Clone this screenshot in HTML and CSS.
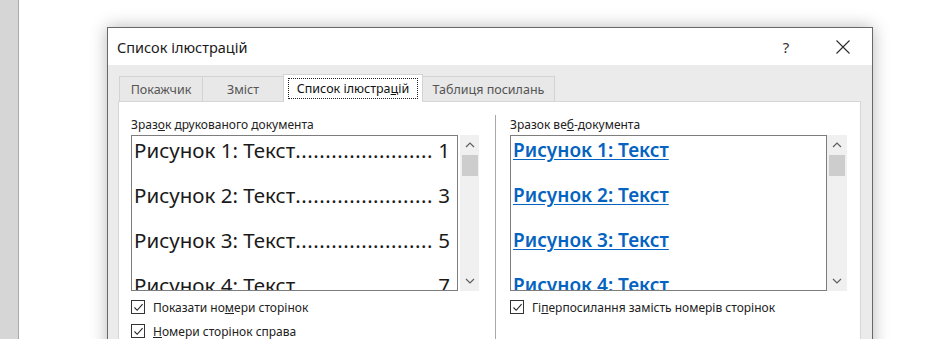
FILE: index.html
```html
<!DOCTYPE html>
<html lang="uk">
<head>
  <meta charset="UTF-8" />
  <title>Список ілюстрацій</title>
  <link rel="stylesheet" href="styles.css">
</head>
<body>
  <div class="screen">
    <div class="side"></div>
    <div class="doc">
      <div class="dialog">
        <div class="titlebar">
          <span class="title">Список ілюстрацій</span>
          <span class="help">?</span>
          <span class="close">
            <svg width="14" height="14" viewBox="0 0 14 14"><path d="M0.5 0.5L13.5 13.5M13.5 0.5L0.5 13.5" stroke="#2b2b2b" stroke-width="1.1" fill="none"/></svg>
          </span>
        </div>

        <div class="dlg-body">
          <div class="tabs">
            <div class="tab t1">Покажчик</div>
            <div class="tab t2">Зміст</div>
            <div class="tab t3 active"><span class="focus">Список ілюстра<u>ц</u>ій</span></div>
            <div class="tab t4">Таблиця посилань</div>
          </div>

          <div class="panel">
            <div class="col col-left">
              <div class="group-label">Зраз<u>о</u>к друкованого документа</div>
              <div class="preview">
                <div class="listbox print">
                  <div class="entry"><span>Рисунок 1: Текст<span class="dots">.......................</span></span><span class="num">1</span></div>
                  <div class="entry"><span>Рисунок 2: Текст<span class="dots">.......................</span></span><span class="num">3</span></div>
                  <div class="entry"><span>Рисунок 3: Текст<span class="dots">.......................</span></span><span class="num">5</span></div>
                  <div class="entry"><span>Рисунок 4: Текст<span class="dots">.......................</span></span><span class="num">7</span></div>
                </div>
                <div class="scrollbar">
                  <svg class="arrow" width="10" height="6" viewBox="0 0 10 6"><path d="M1 5L5 1L9 5" stroke="#5f5f5f" stroke-width="1.2" fill="none"/></svg>
                  <div class="thumb"></div>
                  <svg class="arrow down" width="10" height="6" viewBox="0 0 10 6"><path d="M1 1L5 5L9 1" stroke="#5f5f5f" stroke-width="1.2" fill="none"/></svg>
                </div>
              </div>
              <div class="check">
                <span class="box"><svg width="11" height="11" viewBox="0 0 11 11"><path d="M1.5 5.5L4.2 8.3L9.6 2.2" stroke="#222" stroke-width="1.1" fill="none"/></svg></span>
                <span>Показати но<u>м</u>ери сторінок</span>
              </div>
              <div class="check">
                <span class="box"><svg width="11" height="11" viewBox="0 0 11 11"><path d="M1.5 5.5L4.2 8.3L9.6 2.2" stroke="#222" stroke-width="1.1" fill="none"/></svg></span>
                <span><u>Н</u>омери сторінок справа</span>
              </div>
            </div>

            <div class="sep"></div>

            <div class="col col-right">
              <div class="group-label">Зразок ве<u>б</u>-документа</div>
              <div class="preview">
                <div class="listbox web">
                  <div class="link">Рисунок 1: Текст</div>
                  <div class="link">Рисунок 2: Текст</div>
                  <div class="link">Рисунок 3: Текст</div>
                  <div class="link">Рисунок 4: Текст</div>
                </div>
                <div class="scrollbar">
                  <svg class="arrow" width="10" height="6" viewBox="0 0 10 6"><path d="M1 5L5 1L9 5" stroke="#5f5f5f" stroke-width="1.2" fill="none"/></svg>
                  <div class="thumb"></div>
                  <svg class="arrow down" width="10" height="6" viewBox="0 0 10 6"><path d="M1 1L5 5L9 1" stroke="#5f5f5f" stroke-width="1.2" fill="none"/></svg>
                </div>
              </div>
              <div class="check">
                <span class="box"><svg width="11" height="11" viewBox="0 0 11 11"><path d="M1.5 5.5L4.2 8.3L9.6 2.2" stroke="#222" stroke-width="1.1" fill="none"/></svg></span>
                <span>Гі<u>п</u>ерпосилання замість номерів сторінок</span>
              </div>
            </div>
          </div>
        </div>
      </div>
    </div>
  </div>
</body>
</html>
```

FILE: styles.css
```css
body {
  margin: 0;
  background: #fff;
  font-family: "Noto Sans", "Open Sans", sans-serif;
  color: #1e1e1e;
  overflow: hidden;
}

.screen {
  display: flex;
  height: 339px;
  overflow: hidden;
}

.side {
  width: 18px;
  flex: none;
  background: #d6d6d6;
  border-right: 1px solid #a9a9a9;
}

.doc {
  flex: 1;
  padding: 27px 0 0 88px;
}

.dialog {
  width: 766px;
  box-sizing: border-box;
  border: 1px solid #686868;
  background: #fff;
  box-shadow: 0 0 16px rgba(0, 0, 0, 0.28);
}

/* title bar */
.titlebar {
  height: 37px;
  display: flex;
  align-items: center;
  padding-left: 9px;
}

.title {
  font-size: 14.5px;
  color: #1a1a1a;
  margin-top: 1px;
}

.help {
  margin-left: auto;
  width: 30px;
  margin-right: 27px;
  text-align: center;
  font-size: 15px;
  color: #333;
}

.close {
  width: 30px;
  margin-right: 14px;
  display: flex;
  justify-content: center;
}

/* gray body with tabs */
.dlg-body {
  background: #ebebeb;
  padding: 9px 11px 0 10px;
}

.tabs {
  display: flex;
  align-items: flex-end;
  height: 27px;
  padding-left: 1px;
}

.tab {
  box-sizing: border-box;
  height: 25px;
  border: 1px solid #d3d3d3;
  border-bottom: none;
  background: #e8e8e8;
  color: #555;
  font-size: 12.5px;
  display: flex;
  align-items: center;
  justify-content: center;
  margin-right: -1px;
}

.t1 { width: 84px; }
.t2 { width: 82px; }
.t3 { width: 140px; }
.t4 { width: 133px; }

.tab.active {
  height: 28px;
  margin-bottom: -1px;
  background: #fff;
  color: #111;
  position: relative;
  z-index: 1;
  padding: 3px 4px 3px;
  align-items: stretch;
}

.focus {
  flex: 1;
  border: 1px dotted #222;
  display: flex;
  align-items: center;
  justify-content: center;
}

.panel {
  background: #fff;
  border: 1px solid #d6d6d6;
  height: 260px;
  display: flex;
  padding: 15px 0 0 12px;
}

.col-left {
  width: 348px;
}

.sep {
  width: 1px;
  background: #a8a8a8;
  margin: -2px 14px 0 16px;
}

.col-right {
  width: 337px;
}

.group-label {
  font-size: 12px;
  line-height: 16px;
  color: #222;
  margin-bottom: 2px;
}

.preview {
  display: flex;
  height: 156px;
}

.listbox {
  flex: 1;
  box-sizing: border-box;
  border: 1px solid #7d7d7d;
  overflow: hidden;
}

.scrollbar {
  width: 19px;
  margin-left: 2px;
  background: #f0f0f0;
  display: flex;
  flex-direction: column;
  align-items: center;
}

.col-right .scrollbar {
  width: 20px;
  margin-left: 0;
}

.arrow {
  margin-top: 7px;
}

.arrow.down {
  margin-top: auto;
  margin-bottom: 7px;
}

.thumb {
  width: 16px;
  height: 21px;
  background: #cdcdcd;
  margin-top: 7px;
}

/* printed preview */
.print {
  padding: 0 7px 0 2px;
  font-size: 20.5px;
  color: #1a1a1a;
}

.entry {
  display: flex;
  justify-content: space-between;
  height: 45px;
  line-height: 45px;
  margin-top: -8px;
  white-space: nowrap;
}

.entry + .entry {
  margin-top: 0;
}

.dots {
  letter-spacing: 0.5px;
}

/* web preview */
.web {
  padding-left: 2px;
}

.link {
  height: 45px;
  line-height: 45px;
  margin-top: -8px;
  font-size: 19px;
  font-weight: 600;
  color: #0563c1;
  text-decoration: underline;
  text-underline-offset: 2px;
}

.link + .link {
  margin-top: 0;
}

/* checkboxes */
.check {
  display: flex;
  align-items: center;
  height: 14px;
  margin-top: 9px;
  font-size: 12px;
  color: #222;
}

.check + .check {
  margin-top: 10px;
}

.box {
  box-sizing: border-box;
  width: 14px;
  height: 14px;
  border: 1px solid #333;
  display: flex;
  align-items: center;
  justify-content: center;
  margin-right: 8px;
  background: #fff;
}
```
